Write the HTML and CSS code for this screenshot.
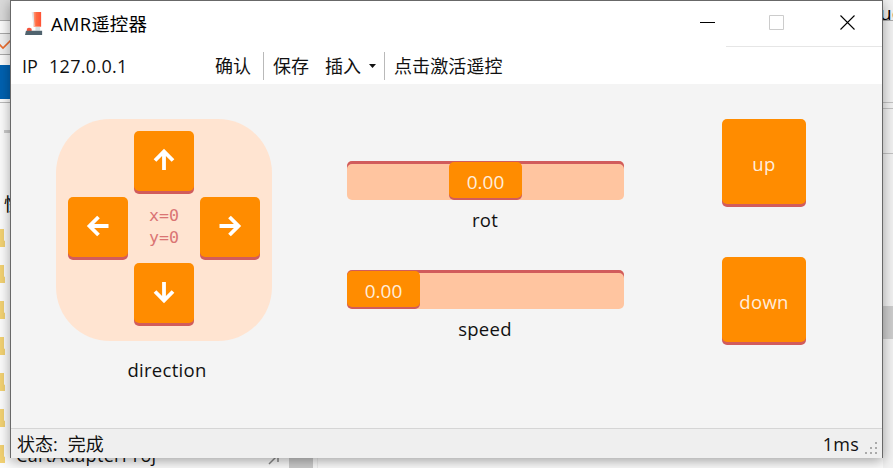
FILE: index.html
```html
<!DOCTYPE html>
<html lang="zh-CN">
<head>
<meta charset="utf-8">
<title>AMR遥控器</title>
<link rel="stylesheet" href="styles.css">
</head>
<body>
<div class="desktop">
  <div class="bg bg-head"></div>
  <div class="bg bg-tab"><svg width="11" height="14" viewBox="0 0 11 14"><path d="M-1 6 3 10 11 2" fill="none" stroke="#ed6d2d" stroke-width="1.6"/></svg></div>
  <div class="bg bg-blue"></div>
  <div class="bg bg-rule"></div>
  <div class="bg bg-dash"></div>
  <span class="bg bg-quick">快</span>
  <div class="bg bg-folders"><i></i><i></i><i></i><i></i><i></i><i></i><i></i></div>
  <span class="bg bg-folder-name">CartAdapterProj</span>
  <svg class="bg bg-pin" width="12" height="14" viewBox="0 0 12 14"><path d="M1 12 9 4M4 4h6v6" fill="none" stroke="#888" stroke-width="1.5"/></svg>
  <div class="bg bg-thumb"></div>
  <div class="bg bg-pane"></div>
  <div class="bg bg-right-lines"></div>
  <div class="bg bg-right-head">ue</div>
  <div class="bg bg-right-line"></div>
  <div class="bg bg-right-thumb"></div>

  <main class="window">
    <header class="titlebar">
      <svg class="app-icon" width="20" height="26" viewBox="0 0 20 26">
        <defs><linearGradient id="stick"><stop offset="0" stop-color="#ffad91"/><stop offset=".45" stop-color="#ff6b42"/><stop offset="1" stop-color="#ff5134"/></linearGradient></defs>
        <path d="M8 1h9v15.500H9z" fill="url(#stick)"/>
        <path d="M7 1h2l1 15H9z" fill="#e4e7e9"/>
        <path d="M11 16.500h5v4h-5z" fill="#d8e0e3"/>
        <path d="M2 18.500q2-2 5 0V21H2z" fill="#f3543d"/>
        <path d="M1 20.500h17V25H0z" fill="#50636e"/>
      </svg>
      <h1 class="title">AMR遥控器</h1>
      <div class="controls">
        <svg width="16" height="16" viewBox="0 0 16 16"><path d="M0 7.500h15" stroke="#000"/></svg>
        <svg width="16" height="16" viewBox="0 0 16 16"><path d="M.5.500h14v14H.5z" fill="none" stroke="#ccc"/></svg>
        <svg width="16" height="16" viewBox="0 0 16 16"><path d="M.5.500 14.500 14.500M14.500.500.500 14.500" stroke="#000" stroke-width="1.100"/></svg>
      </div>
    </header>
    <nav class="toolbar">
      <span class="ip-label">IP</span>
      <span class="ip">127.0.0.1</span>
      <span class="confirm">确认</span>
      <i class="sep"></i>
      <span class="save">保存</span>
      <span class="insert">插入</span>
      <svg class="caret" width="7" height="4" viewBox="0 0 7 4"><path d="M0 0h7L3.500 4z" fill="#111"/></svg>
      <i class="sep"></i>
      <span class="activate">点击激活遥控</span>
    </nav>
    <section class="content">
      <div class="direction">
        <div class="pad">
          <button class="key north"><svg width="24" height="24" viewBox="0 0 24 24"><path d="M12 22V4M3 12.500 12 3.500l9 9"/></svg></button>
          <button class="key west"><svg width="24" height="24" viewBox="0 0 24 24"><path d="M22.500 12H4M12.500 3 3.500 12l9 9"/></svg></button>
          <div class="coords">x=0<br>y=0</div>
          <button class="key east"><svg width="24" height="24" viewBox="0 0 24 24"><path d="M1.500 12H20M11.500 3l9 9-9 9"/></svg></button>
          <button class="key south"><svg width="24" height="24" viewBox="0 0 24 24"><path d="M12 2v18M3 11.500l9 9 9-9"/></svg></button>
        </div>
        <p class="label">direction</p>
      </div>
      <div class="sliders">
        <div class="field">
          <div class="track centered"><div class="thumb">0.00</div></div>
          <p class="label">rot</p>
        </div>
        <div class="field">
          <div class="track"><div class="thumb">0.00</div></div>
          <p class="label">speed</p>
        </div>
      </div>
      <div class="lift">
        <button class="key big">up</button>
        <button class="key big">down</button>
      </div>
    </section>
    <footer class="statusbar">
      <span class="state">状态:</span><span class="done">完成</span>
      <span class="latency">1ms</span>
      <svg class="grip" width="14" height="14" viewBox="0 0 14 14"><path d="M10 0h2v2h-2zM5 5h2v2H5zM10 5h2v2h-2zM0 10h2v2H0zM5 10h2v2H5zM10 10h2v2h-2z" fill="#aaa"/></svg>
    </footer>
  </main>
</div>
</body>
</html>
```
FILE: styles.css
```css
* { box-sizing: border-box; }
body { margin: 0; font-family: "Open Sans", "Noto Sans CJK SC", sans-serif; color: #111; }
p, h1 { margin: 0; font-weight: 400; }
button { font: inherit; border: 0; padding: 0; }
svg { display: block; }

.desktop { position: relative; width: 893px; height: 468px; overflow: hidden; background: #fcfcfc; padding-left: 10px; }
.bg { position: absolute; }
.bg-head { left: 0; top: 0; width: 11px; height: 21px; background: #dadada; border-bottom: 1px solid #aaa; }
.bg-tab { left: 0; top: 33px; width: 11px; height: 22px; border-top: 1px solid #aaa; border-bottom: 1px solid #aaa; background: #f2f2f2; padding-top: 4px; }
.bg-blue { left: 0; top: 65px; width: 11px; height: 34px; background: #0062b1; }
.bg-rule { left: 0; top: 102px; width: 11px; height: 1px; background: #bbb; }
.bg-dash { left: 4px; top: 130px; width: 7px; height: 3px; background: #ccc; }
.bg-quick { left: 4px; top: 191px; font-size: 18px; line-height: 26px; color: #000; }
.bg-folders { left: 0; top: 229px; width: 5px; display: grid; gap: 18px; }
.bg-folders i { height: 18px; background: #f3d273; clip-path: polygon(0 0, 80% 0, 80% 62%, 100% 68%, 100% 100%, 0 100%); }
.bg-folder-name { left: 16px; top: 442px; font-size: 18px; line-height: 26px; color: #111; letter-spacing: .3px; }
.bg-pin { left: 268px; top: 452px; }
.bg-thumb { left: 289px; top: 450px; width: 24px; height: 18px; background: #cdcdcd; }
.bg-pane { left: 317px; top: 450px; width: 576px; height: 18px; border-left: 1px solid #eee; }
.bg-right-head { left: 880px; top: 0; width: 13px; height: 21px; background: #f2f2f2; border-bottom: 1px solid #aaa; font-size: 19px; line-height: 27px; overflow: hidden; color: #000; }
.bg-right-lines { left: 883px; top: 21px; width: 10px; height: 447px; background: #f2f2f2; }
.bg-right-line { left: 883px; top: 102px; width: 10px; height: 52px; border: solid #c3c3c3; border-width: 1px 0; background: linear-gradient(#f2f2f2 5px, #c3c3c3 5px, #c3c3c3 6px, #f2f2f2 6px); }
.bg-right-thumb { left: 883px; top: 306px; width: 10px; height: 33px; background: #cdcdcd; }

.window { position: relative; width: 873px; height: 458px; display: flex; flex-direction: column; background: #f4f4f4; border: 1px solid #686868; border-bottom: 0; box-shadow: 0 3px 12px rgba(0,0,0,.36); }
.titlebar { height: 46px; flex: none; display: flex; align-items: flex-start; padding: 10px 27px 0 14px; background: linear-gradient(#e6e6e6, #e6e6e6) right bottom / 156px 1px no-repeat #fff; }
.app-icon { width: 19px; height: 25px; }
.title { margin-left: 7px; font-size: 18.5px; line-height: 25px; color: #000; letter-spacing: .15px; }
.controls { display: flex; gap: 53px; margin: 4px 0 0 auto; }
.controls svg:last-child { margin-left: 2px; margin-right: -1px; }
.toolbar { height: 37px; flex: none; display: flex; align-items: center; background: #fff; padding-left: 11px; font-size: 18px; line-height: 30px; }
.toolbar span { padding-top: 1px; }
.ip-label { width: 27px; }
.ip { width: 166px; letter-spacing: .3px; }
.sep { width: 1px; height: 28px; background: #b9b9b9; }
.confirm { width: 48px; }
.save { width: 52px; margin-left: 9px; }
.insert { width: 44px; }
.caret { margin-right: 8px; }
.activate { margin-left: 9px; letter-spacing: .1px; }

.content { height: 344px; flex: none; display: flex; align-items: flex-start; padding: 35px 76px 0 45px; }
.direction { width: 222px; }
.pad { width: 216px; height: 222px; padding: 12px; display: grid; grid-template: repeat(3, 60px) / repeat(3, 60px); gap: 6px; border-radius: 54px; background: #ffe4d1; }
.key { display: grid; place-items: center; color: #ffeddc; background: #ff8c00; border-radius: 5px; box-shadow: 0 3px #d15c5c; }
.key svg { margin-bottom: 2px; }
.key path { fill: none; stroke: #fff; stroke-width: 3.800; }
.north, .south { grid-column: 2; }
.west { grid-column: 1; }
.coords { align-self: center; text-align: center; color: #da7474; font: 16.6px/22px "DejaVu Sans Mono", monospace; }
.label { text-align: center; font-size: 18.5px; line-height: 26px; letter-spacing: .3px; }
.direction .label { margin-top: 16px; }
.sliders { width: 277px; margin: 42px 0 0 69px; display: grid; gap: 31px; }
.field { height: 78px; }
.track { height: 39px; display: flex; background: #ffc5a0; border-radius: 5px; box-shadow: inset 0 3px #d15c5c; }
.centered { justify-content: center; }
.thumb { width: 73px; height: 36px; margin-top: 1px; border-radius: 5px; background: #ff8c00; box-shadow: 0 2px #d15c5c; color: #ffeddc; font-size: 19px; line-height: 40px; text-align: center; }
.field .label { margin-top: 7px; padding-right: 1px; }
.lift { margin-left: auto; display: grid; gap: 53px; }
.big { width: 84px; height: 85px; font-size: 18.5px; padding-top: 3px; letter-spacing: .3px; }

.statusbar { flex: 1; display: flex; background: #efefef; border-top: 1px solid #d5d5d5; padding: 1px 3px 0 6px; font-size: 18px; line-height: 28px; }
.done { margin-left: 10px; }
.latency { margin-left: auto; letter-spacing: .2px; }
.grip { margin: 12px 0 0 6px; }
```
